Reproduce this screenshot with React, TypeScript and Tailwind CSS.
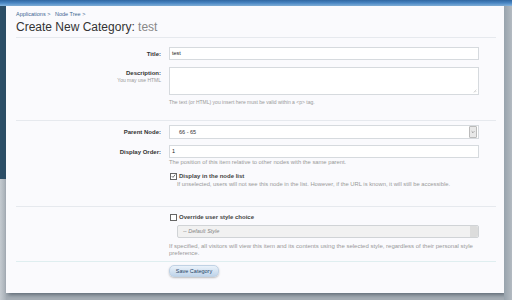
import React from "react";

const F = { fontFamily: '"Liberation Sans", Arial, sans-serif' };

function Label({ children, sub }: { children: React.ReactNode; sub?: string }) {
  return (
    <div className="flex flex-col items-end text-right">
      <div className="text-[6px] font-bold leading-[8px] text-[#333]">{children}</div>
      {sub && <div className="text-[5px] leading-[6px] text-[#999]">{sub}</div>}
    </div>
  );
}

function Explain({ children, className = "" }: { children: React.ReactNode; className?: string }) {
  return <div className={`leading-[8px] text-[#999] ${className}`}>{children}</div>;
}

function Check({ checked }: { checked?: boolean }) {
  return (
    <span className="inline-flex h-[7px] w-[7px] items-center justify-center border border-[#666] bg-white">
      {checked && (
        <svg viewBox="0 0 8 8" className="h-[6px] w-[6px]">
          <path d="M1.2 4.2 L3.2 6.2 L6.8 1.6" stroke="#333" strokeWidth="1.1" fill="none" />
        </svg>
      )}
    </span>
  );
}

export default function App() {
  return (
    <div className="relative h-[300px] w-[512px] overflow-hidden bg-[#a6aeb6]" style={F}>
      <div className="h-[6px] w-full bg-gradient-to-b from-[#2f66a1] via-[#4a87c4] to-[#86b6e0]" />
      <div className="flex">
        <div className="flex w-[6px] flex-col">
          <div className="h-[173px] bg-[#2c4e67]" />
          <div className="h-[121px] bg-gradient-to-r from-[#c4cad0] to-[#a9b1b9]" />
        </div>
        <div className="h-[287px] w-[498px] bg-[#fafafd] pl-[10px] pr-[8px] shadow-[2px_2px_4px_rgba(40,55,70,0.55)]">
          {/* header */}
          <div className="border-b border-[#e6e9ee] pb-[3px] pt-[4px]">
            <div className="text-[5.5px] leading-[8px] text-[#3d6591]">
              Applications &gt; &nbsp; Node Tree &gt;
            </div>
            <div className="mt-[2px] text-[12px] leading-[14px] text-[#333]">
              Create New Category: <span className="text-[#888]">test</span>
            </div>
          </div>

          <div className="grid grid-cols-[145px_310px] gap-x-[8px]">
            {/* Title */}
            <div className="mt-[9px] flex h-[13px] items-center justify-end">
              <Label>Title:</Label>
            </div>
            <div className="mt-[9px] flex h-[13px] items-center border border-[#d6dade] bg-white px-[2px] text-[5.5px] text-[#222]">
              test
            </div>
            {/* Description */}
            <div className="mt-[7px] pt-[2px]">
              <Label sub="You may use HTML">Description:</Label>
            </div>
            <div className="mt-[7px]">
              <div className="relative h-[28px] border border-[#d6dade] bg-white">
                <svg viewBox="0 0 6 6" className="absolute bottom-[1px] right-[1px] h-[4px] w-[4px]">
                  <path d="M1 5 L5 1 M3 5 L5 3" stroke="#aaa" strokeWidth="0.7" />
                </svg>
              </div>
              <Explain className="mt-[3px] text-[5px]">
                The text (or HTML) you insert here must be valid within a &lt;p&gt; tag.
              </Explain>
            </div>
          </div>

          <div className="mt-[14px] border-b border-[#e6e9ee]" />

          <div className="grid grid-cols-[145px_310px] gap-x-[8px]">
            {/* Parent node */}
            <div className="mt-[4px] flex h-[14px] items-center justify-end">
              <Label>Parent Node:</Label>
            </div>
            <div className="mt-[4px] flex h-[14px] items-center justify-between border border-[#d6dade] bg-white pl-[9px] pr-[1px] text-[5.5px] text-[#333]">
              <span>66 - 65</span>
              <span className="flex h-[12px] w-[8px] items-center justify-center rounded-[1px] border border-[#bbb] bg-[#e8e8e8]">
                <svg viewBox="0 0 6 6" className="h-[4px] w-[4px]">
                  <path d="M1 2 L3 4 L5 2" stroke="#666" strokeWidth="0.9" fill="none" />
                </svg>
              </span>
            </div>
            {/* Display order */}
            <div className="mt-[6px] flex h-[13px] items-center justify-end">
              <Label>Display Order:</Label>
            </div>
            <div className="mt-[6px]">
              <div className="flex h-[13px] items-center border border-[#d6dade] bg-white px-[2px] text-[5.5px] text-[#222]">
                1
              </div>
              <Explain className="text-[5.8px]">The position of this item relative to other nodes with the same parent.</Explain>
            </div>
            <div />
            <div className="mt-[6px]">
              <div className="flex h-[8px] items-center gap-[2px] pl-[1px]">
                <Check checked />
                <span className="text-[6px] font-bold text-[#444]">Display in the node list</span>
              </div>
              <Explain className="pl-[8px] text-[5.8px]">
                If unselected, users will not see this node in the list. However, if the URL is known, it will still be accessible.
              </Explain>
            </div>
          </div>

          <div className="mt-[18px] border-b border-[#e6e9ee]" />

          <div className="grid grid-cols-[145px_310px] gap-x-[8px]">
            <div />
            <div className="mt-[6px]">
              <div className="flex h-[8px] items-center gap-[2px] pl-[1px]">
                <Check />
                <span className="text-[6px] font-bold text-[#444]">Override user style choice</span>
              </div>
              <div className="ml-[8px] mt-[4px] flex h-[13px] items-center justify-between rounded-[2px] border border-[#d0d3d6] bg-[#f1f1f1] pl-[5px] pr-0 text-[5.5px] italic text-[#888]">
                <span>-- Default Style</span>
                <span className="h-full w-[8px] rounded-r-[2px] bg-[#dcdcdc]" />
              </div>
              <div className="mt-[5px] pr-[6px] text-[6px] leading-[6.5px] text-[#999]">
                If specified, all visitors will view this item and its contents using the selected style, regardless of their personal style preference.
              </div>
            </div>
          </div>

          <div className="mt-[5px] border-b border-[#dfeef0]" />

          <div className="grid grid-cols-[145px_310px] gap-x-[8px]">
            <div />
            <div className="mt-[3px]">
              <button className="flex h-[12px] w-[50px] items-center justify-center rounded-[5px] border border-[#c0d2e4] bg-gradient-to-b from-[#eaf2fa] to-[#bfd4ea] text-[5.5px] text-[#1e3f66] shadow-[0_1px_2px_rgba(0,0,0,0.25)]">
                Save Category
              </button>
            </div>
          </div>
        </div>
        <div className="h-[294px] flex-1 bg-gradient-to-r from-[#98a3ad] to-[#b3bac1]" />
      </div>
    </div>
  );
}
